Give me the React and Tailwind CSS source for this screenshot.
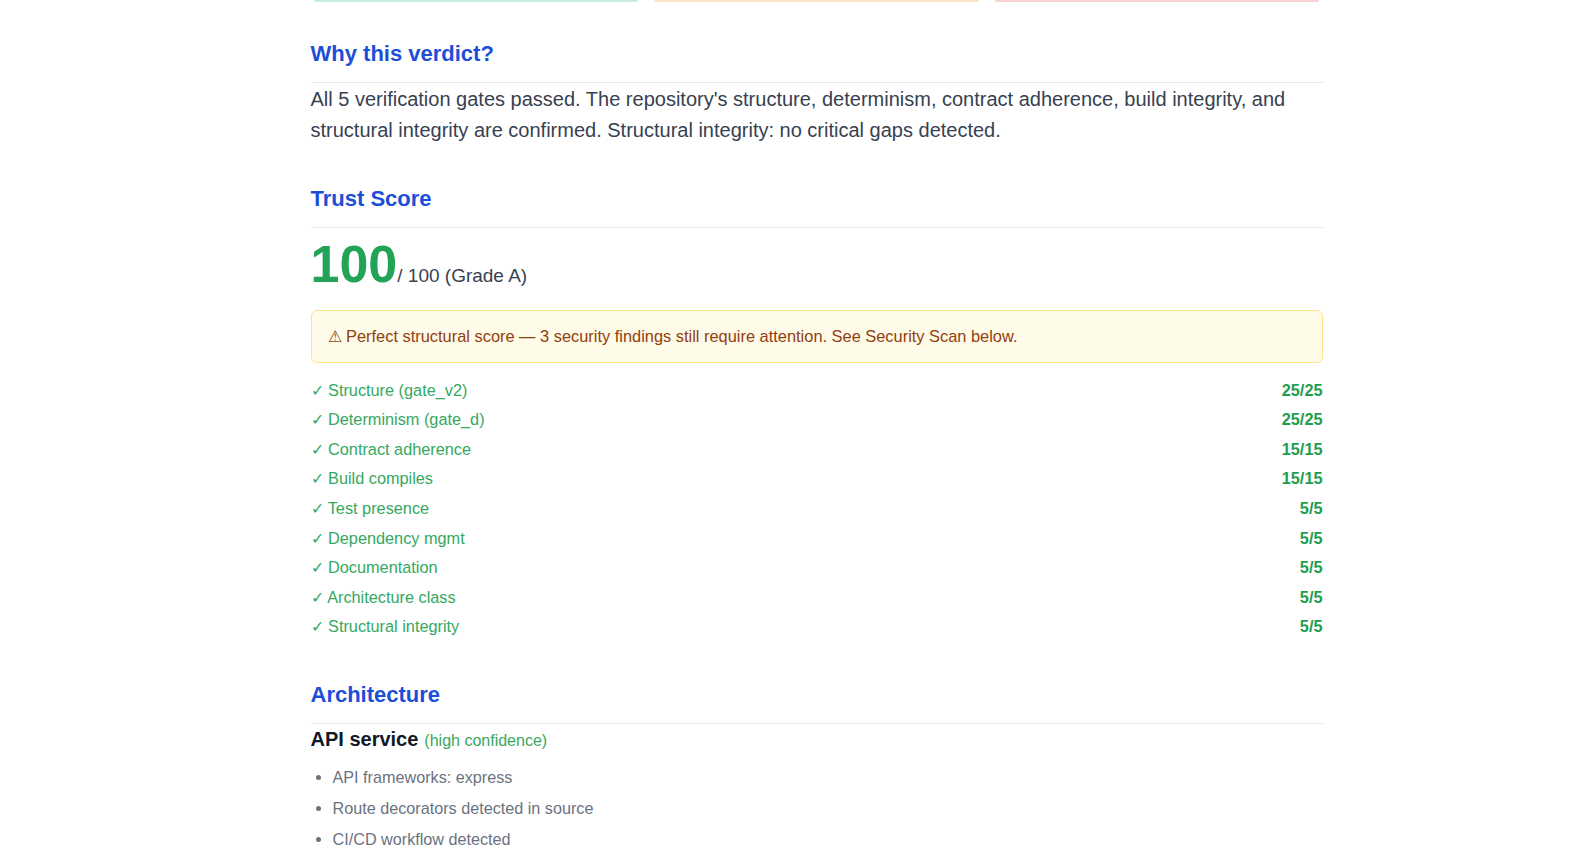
import React from 'react';

const rows = [
  ['Structure (gate_v2)', '25/25'],
  ['Determinism (gate_d)', '25/25'],
  ['Contract adherence', '15/15'],
  ['Build compiles', '15/15'],
  ['Test presence', '5/5'],
  ['Dependency mgmt', '5/5'],
  ['Documentation', '5/5'],
  ['Architecture class', '5/5'],
  ['Structural integrity', '5/5'],
];

const signals = [
  'API frameworks: express',
  'Route decorators detected in source',
  'CI/CD workflow detected',
];

const SectionTitle = ({ children }) => (
  <h2 className="text-[22px] font-bold text-[#1d4ed8] leading-[28px] pb-[14px] border-b border-[#e5e7eb]">
    {children}
  </h2>
);

export default function App() {
  return (
    <div className="min-h-screen bg-white font-['Liberation_Sans',Arial,sans-serif] overflow-hidden">
      <div className="max-w-[1054px] mx-auto pl-[42px]">
        {/* bottoms of the gate cards scrolled above */}
        <div className="grid grid-cols-3 gap-4 px-[3px]">
          <div className="h-[2px] rounded-b bg-[#c6ede2]" />
          <div className="h-[2px] rounded-b bg-[#fde2c8]" />
          <div className="h-[2px] rounded-b bg-[#fbd0d3]" />
        </div>

        <section className="mt-[38px]">
          <SectionTitle>Why this verdict?</SectionTitle>
          <p className="mt-[1px] text-[20px] leading-[31px] text-[#374151]">
            All 5 verification gates passed. The repository's structure, determinism, contract adherence, build integrity, and
            structural integrity are confirmed. Structural integrity: no critical gaps detected.
          </p>
        </section>

        <section className="mt-[39px]">
          <SectionTitle>Trust Score</SectionTitle>
          <div className="mt-[10px] flex items-baseline h-[52px]">
            <span className="text-[52px] font-bold leading-[52px] text-[#22a356]">100</span>
            <span className="text-[19px] leading-[20px] text-[#374151]">/ 100 (Grade A)</span>
          </div>
          <div className="mt-[20px] h-[53px] flex items-center px-4 rounded-md border border-[#fde68a] bg-[#fefbe8] text-[16.4px] text-[#92400e]">
            ⚠ Perfect structural score — 3 security findings still require attention. See Security Scan below.
          </div>
          <ul className="mt-[12px]">
            {rows.map(([label, score]) => (
              <li key={label} className="flex justify-between items-center h-[29.6px] text-[16.3px]">
                <span className="text-[#35a862]">✓ {label}</span>
                <span className="font-bold text-[#1f9d4f]">{score}</span>
              </li>
            ))}
          </ul>
        </section>

        <section className="mt-[40px]">
          <SectionTitle>Architecture</SectionTitle>
          <div className="flex items-baseline gap-[6px]">
            <span className="text-[20px] font-bold text-[#111827]">API service</span>
            <span className="text-[16px] text-[#3aa65f]">(high confidence)</span>
          </div>
          <ul className="mt-[8px] list-disc pl-[22px] text-[16.2px] text-[#6b7280] marker:text-[#6b7280]">
            {signals.map((s) => (
              <li key={s} className="leading-[31px]">{s}</li>
            ))}
          </ul>
        </section>
      </div>
    </div>
  );
}
